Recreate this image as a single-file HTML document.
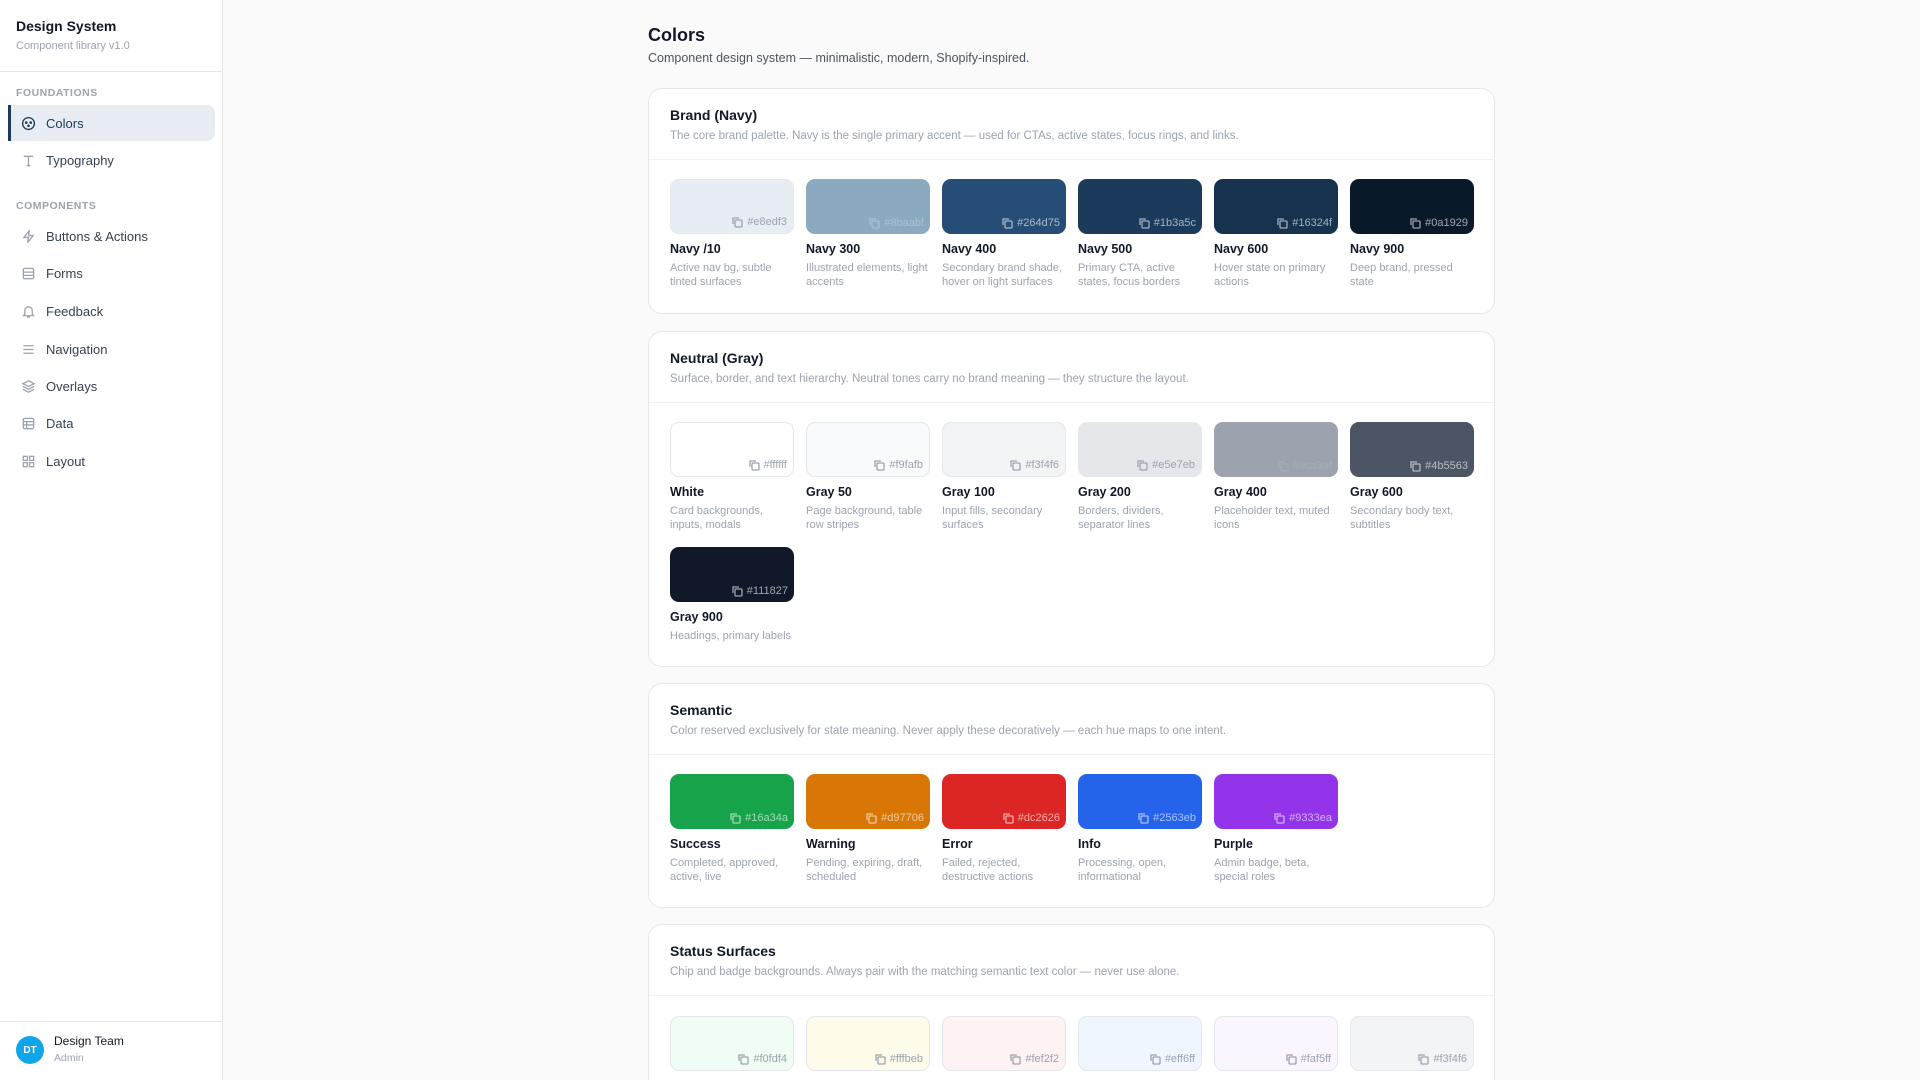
<!DOCTYPE html>
<html><head><meta charset="utf-8"><style>
*{box-sizing:border-box;margin:0;padding:0}
html,body{width:1920px;height:1080px;overflow:hidden}
body{background:#fafafa;font-family:"Liberation Sans",Arial,sans-serif;color:#111827}
.wrap{position:relative;width:1920px;height:1080px;overflow:hidden}
.sb{position:absolute;left:0;top:0;width:223px;height:1080px;background:#fff;border-right:1px solid #e5e7eb}
.sbh{height:72px;border-bottom:1px solid #e5e7eb;padding:17px 16px 0}
.sbh h1{font-size:14px;font-weight:700;line-height:18px}
.sbh p{font-size:11px;color:#9ca3af;margin-top:5px}
.sec{font-size:10.5px;letter-spacing:.5px;color:#9ca3af;font-weight:600;position:absolute;left:16px}
.it{position:absolute;left:8px;width:207px;height:36px;display:flex;align-items:center;padding-left:13px;font-size:13px;color:#374151;border-radius:0 8px 8px 0}
.it svg{width:15px;height:15px;margin-right:10px;stroke:#9ca3af;fill:none;stroke-width:1.4}
.it.a{background:#e8edf3;color:#1b3a5c;border-left:3px solid #1b3a5c;padding-left:10px}
.it.a svg{stroke:#1b3a5c}
.ft{position:absolute;left:0;bottom:0;width:222px;height:59px;border-top:1px solid #e5e7eb}
.av{position:absolute;left:16px;top:14px;width:28px;height:28px;border-radius:50%;background:#0ea5e9;color:#fff;font-size:10px;font-weight:700;display:flex;align-items:center;justify-content:center}
.main{position:absolute;left:648px;top:0;width:847px;height:1080px}
.main h2{position:absolute;top:25px;font-size:18px;font-weight:600;line-height:20px}
.main .sub{position:absolute;top:51px;font-size:12.5px;color:#4b5563;white-space:nowrap}
.card{position:absolute;left:0;width:847px;background:#fff;border:1px solid #e5e7eb;border-radius:14px;overflow:hidden}
.ch{height:71px;border-bottom:1px solid #f0f1f3;padding:17px 21px 0}
.ch h3{font-size:14px;font-weight:700;line-height:18px}
.ch p{font-size:11.5px;color:#9ca3af;margin-top:6px;white-space:nowrap}
.grid{display:grid;grid-template-columns:repeat(6,124px);column-gap:12px;row-gap:15px;padding:19px 21px 0}
.sw{height:55px;border-radius:9px;position:relative}
.sw.b{border:1px solid #e5e7eb}
.hx{position:absolute;right:6px;bottom:5px;font-size:11px;display:flex;align-items:center;gap:4px;color:rgba(255,255,255,.6)}
.hx.d{color:#9ca3af}
.hx svg{width:12px;height:12px;fill:none;stroke:currentColor;stroke-width:1.3}
.nm{font-size:12.5px;font-weight:700;margin-top:8px;line-height:15px}
.ds{font-size:11px;color:#9ca3af;margin-top:5px;line-height:13.5px}
</style></head><body><div class="wrap">
<div class="sb">
<div class="sbh"><h1>Design System</h1><p>Component library v1.0</p></div>
<div class="sec" style="top:87px">FOUNDATIONS</div>
<div class="it a" style="top:105px"><svg viewBox="0 0 16 16"><circle cx="8" cy="8" r="6.3"/><circle cx="5.6" cy="7" r=".7" fill="#1b3a5c"/><circle cx="10.4" cy="7" r=".7" fill="#1b3a5c"/><circle cx="8" cy="10.4" r=".7" fill="#1b3a5c"/></svg>Colors</div>
<div class="it" style="top:142px"><svg viewBox="0 0 16 16"><path d="M3 3.5h10M8 3.5v10M6 13.5h4"/></svg>Typography</div>
<div class="sec" style="top:200px">COMPONENTS</div>
<div class="it" style="top:218px"><svg viewBox="0 0 16 16"><path d="M9 1.5L3 9h5l-1 5.5L13 7H8z"/></svg>Buttons &amp; Actions</div>
<div class="it" style="top:255px"><svg viewBox="0 0 16 16"><rect x="2.5" y="2.5" width="11" height="11" rx="1.5"/><path d="M2.5 6.5h11M2.5 10h11"/></svg>Forms</div>
<div class="it" style="top:293px"><svg viewBox="0 0 16 16"><path d="M4 11V7a4 4 0 018 0v4l1.3 1.5H2.7zM6.5 14h3"/></svg>Feedback</div>
<div class="it" style="top:331px"><svg viewBox="0 0 16 16"><path d="M2.5 4h11M2.5 8h11M2.5 12h11"/></svg>Navigation</div>
<div class="it" style="top:368px"><svg viewBox="0 0 16 16"><path d="M8 2l6 3-6 3-6-3zM2 8l6 3 6-3M2 11l6 3 6-3"/></svg>Overlays</div>
<div class="it" style="top:405px"><svg viewBox="0 0 16 16"><rect x="2.5" y="2.5" width="11" height="11" rx="1.5"/><path d="M2.5 6h11M6 6v7.5M2.5 9.5h11"/></svg>Data</div>
<div class="it" style="top:443px"><svg viewBox="0 0 16 16"><rect x="2.5" y="2.5" width="4.3" height="4.3"/><rect x="9.2" y="2.5" width="4.3" height="4.3"/><rect x="2.5" y="9.2" width="4.3" height="4.3"/><rect x="9.2" y="9.2" width="4.3" height="4.3"/></svg>Layout</div>
<div class="ft"><div class="av">DT</div><div style="position:absolute;left:54px;top:12px;font-size:12px;color:#111827">Design Team</div><div style="position:absolute;left:54px;top:30px;font-size:10.5px;color:#9ca3af">Admin</div></div>
</div>
<div class="main">
<h2>Colors</h2>
<div class="sub">Component design system — minimalistic, modern, Shopify-inspired.</div>

<div class="card" style="top:88px;height:226px">
<div class="ch"><h3>Brand (Navy)</h3><p>The core brand palette. Navy is the single primary accent — used for CTAs, active states, focus rings, and links.</p></div>
<div class="grid">
<div><div class="sw b" style="background:#e8edf3"><div class="hx d"><svg viewBox="0 0 12 12"><rect x="4" y="4" width="7" height="7" rx="1"/><path d="M2 8V2h6"/></svg>#e8edf3</div></div><div class="nm">Navy /10</div><div class="ds">Active nav bg, subtle tinted surfaces</div></div>
<div><div class="sw" style="background:#8baabf"><div class="hx" style="color:rgba(255,255,255,.25)"><svg viewBox="0 0 12 12"><rect x="4" y="4" width="7" height="7" rx="1"/><path d="M2 8V2h6"/></svg>#8baabf</div></div><div class="nm">Navy 300</div><div class="ds">Illustrated elements, light accents</div></div>
<div><div class="sw" style="background:#264d75"><div class="hx"><svg viewBox="0 0 12 12"><rect x="4" y="4" width="7" height="7" rx="1"/><path d="M2 8V2h6"/></svg>#264d75</div></div><div class="nm">Navy 400</div><div class="ds">Secondary brand shade, hover on light surfaces</div></div>
<div><div class="sw" style="background:#1b3a5c"><div class="hx"><svg viewBox="0 0 12 12"><rect x="4" y="4" width="7" height="7" rx="1"/><path d="M2 8V2h6"/></svg>#1b3a5c</div></div><div class="nm">Navy 500</div><div class="ds">Primary CTA, active states, focus borders</div></div>
<div><div class="sw" style="background:#16324f"><div class="hx"><svg viewBox="0 0 12 12"><rect x="4" y="4" width="7" height="7" rx="1"/><path d="M2 8V2h6"/></svg>#16324f</div></div><div class="nm">Navy 600</div><div class="ds">Hover state on primary actions</div></div>
<div><div class="sw" style="background:#0a1929"><div class="hx"><svg viewBox="0 0 12 12"><rect x="4" y="4" width="7" height="7" rx="1"/><path d="M2 8V2h6"/></svg>#0a1929</div></div><div class="nm">Navy 900</div><div class="ds">Deep brand, pressed state</div></div>
</div></div>

<div class="card" style="top:331px;height:336px">
<div class="ch"><h3>Neutral (Gray)</h3><p>Surface, border, and text hierarchy. Neutral tones carry no brand meaning — they structure the layout.</p></div>
<div class="grid">
<div><div class="sw b" style="background:#fff"><div class="hx d"><svg viewBox="0 0 12 12"><rect x="4" y="4" width="7" height="7" rx="1"/><path d="M2 8V2h6"/></svg>#ffffff</div></div><div class="nm">White</div><div class="ds">Card backgrounds, inputs, modals</div></div>
<div><div class="sw b" style="background:#f9fafb"><div class="hx d"><svg viewBox="0 0 12 12"><rect x="4" y="4" width="7" height="7" rx="1"/><path d="M2 8V2h6"/></svg>#f9fafb</div></div><div class="nm">Gray 50</div><div class="ds">Page background, table row stripes</div></div>
<div><div class="sw b" style="background:#f3f4f6"><div class="hx d"><svg viewBox="0 0 12 12"><rect x="4" y="4" width="7" height="7" rx="1"/><path d="M2 8V2h6"/></svg>#f3f4f6</div></div><div class="nm">Gray 100</div><div class="ds">Input fills, secondary surfaces</div></div>
<div><div class="sw b" style="background:#e5e7eb"><div class="hx d"><svg viewBox="0 0 12 12"><rect x="4" y="4" width="7" height="7" rx="1"/><path d="M2 8V2h6"/></svg>#e5e7eb</div></div><div class="nm">Gray 200</div><div class="ds">Borders, dividers, separator lines</div></div>
<div><div class="sw" style="background:#9ca3af"><div class="hx" style="color:rgba(255,255,255,.1)"><svg viewBox="0 0 12 12"><rect x="4" y="4" width="7" height="7" rx="1"/><path d="M2 8V2h6"/></svg>#9ca3af</div></div><div class="nm">Gray 400</div><div class="ds">Placeholder text, muted icons</div></div>
<div><div class="sw" style="background:#4b5563"><div class="hx"><svg viewBox="0 0 12 12"><rect x="4" y="4" width="7" height="7" rx="1"/><path d="M2 8V2h6"/></svg>#4b5563</div></div><div class="nm">Gray 600</div><div class="ds">Secondary body text, subtitles</div></div>
<div><div class="sw" style="background:#111827"><div class="hx"><svg viewBox="0 0 12 12"><rect x="4" y="4" width="7" height="7" rx="1"/><path d="M2 8V2h6"/></svg>#111827</div></div><div class="nm">Gray 900</div><div class="ds" style="white-space:nowrap">Headings, primary labels</div></div>
</div></div>

<div class="card" style="top:683px;height:225px">
<div class="ch"><h3>Semantic</h3><p>Color reserved exclusively for state meaning. Never apply these decoratively — each hue maps to one intent.</p></div>
<div class="grid">
<div><div class="sw" style="background:#16a34a"><div class="hx"><svg viewBox="0 0 12 12"><rect x="4" y="4" width="7" height="7" rx="1"/><path d="M2 8V2h6"/></svg>#16a34a</div></div><div class="nm">Success</div><div class="ds">Completed, approved, active, live</div></div>
<div><div class="sw" style="background:#d97706"><div class="hx"><svg viewBox="0 0 12 12"><rect x="4" y="4" width="7" height="7" rx="1"/><path d="M2 8V2h6"/></svg>#d97706</div></div><div class="nm">Warning</div><div class="ds">Pending, expiring, draft, scheduled</div></div>
<div><div class="sw" style="background:#dc2626"><div class="hx"><svg viewBox="0 0 12 12"><rect x="4" y="4" width="7" height="7" rx="1"/><path d="M2 8V2h6"/></svg>#dc2626</div></div><div class="nm">Error</div><div class="ds">Failed, rejected, destructive actions</div></div>
<div><div class="sw" style="background:#2563eb"><div class="hx"><svg viewBox="0 0 12 12"><rect x="4" y="4" width="7" height="7" rx="1"/><path d="M2 8V2h6"/></svg>#2563eb</div></div><div class="nm">Info</div><div class="ds">Processing, open, informational</div></div>
<div><div class="sw" style="background:#9333ea"><div class="hx"><svg viewBox="0 0 12 12"><rect x="4" y="4" width="7" height="7" rx="1"/><path d="M2 8V2h6"/></svg>#9333ea</div></div><div class="nm">Purple</div><div class="ds">Admin badge, beta, special roles</div></div>
</div></div>

<div class="card" style="top:924px;height:200px">
<div class="ch"><h3>Status Surfaces</h3><p>Chip and badge backgrounds. Always pair with the matching semantic text color — never use alone.</p></div>
<div class="grid" style="padding-top:20px">
<div><div class="sw b" style="background:#f0fdf4"><div class="hx d"><svg viewBox="0 0 12 12"><rect x="4" y="4" width="7" height="7" rx="1"/><path d="M2 8V2h6"/></svg>#f0fdf4</div></div></div>
<div><div class="sw b" style="background:#fffbeb"><div class="hx d"><svg viewBox="0 0 12 12"><rect x="4" y="4" width="7" height="7" rx="1"/><path d="M2 8V2h6"/></svg>#fffbeb</div></div></div>
<div><div class="sw b" style="background:#fef2f2"><div class="hx d"><svg viewBox="0 0 12 12"><rect x="4" y="4" width="7" height="7" rx="1"/><path d="M2 8V2h6"/></svg>#fef2f2</div></div></div>
<div><div class="sw b" style="background:#eff6ff"><div class="hx d"><svg viewBox="0 0 12 12"><rect x="4" y="4" width="7" height="7" rx="1"/><path d="M2 8V2h6"/></svg>#eff6ff</div></div></div>
<div><div class="sw b" style="background:#faf5ff"><div class="hx d"><svg viewBox="0 0 12 12"><rect x="4" y="4" width="7" height="7" rx="1"/><path d="M2 8V2h6"/></svg>#faf5ff</div></div></div>
<div><div class="sw b" style="background:#f3f4f6"><div class="hx d"><svg viewBox="0 0 12 12"><rect x="4" y="4" width="7" height="7" rx="1"/><path d="M2 8V2h6"/></svg>#f3f4f6</div></div></div>
</div></div>
</div>
</div></body></html>
